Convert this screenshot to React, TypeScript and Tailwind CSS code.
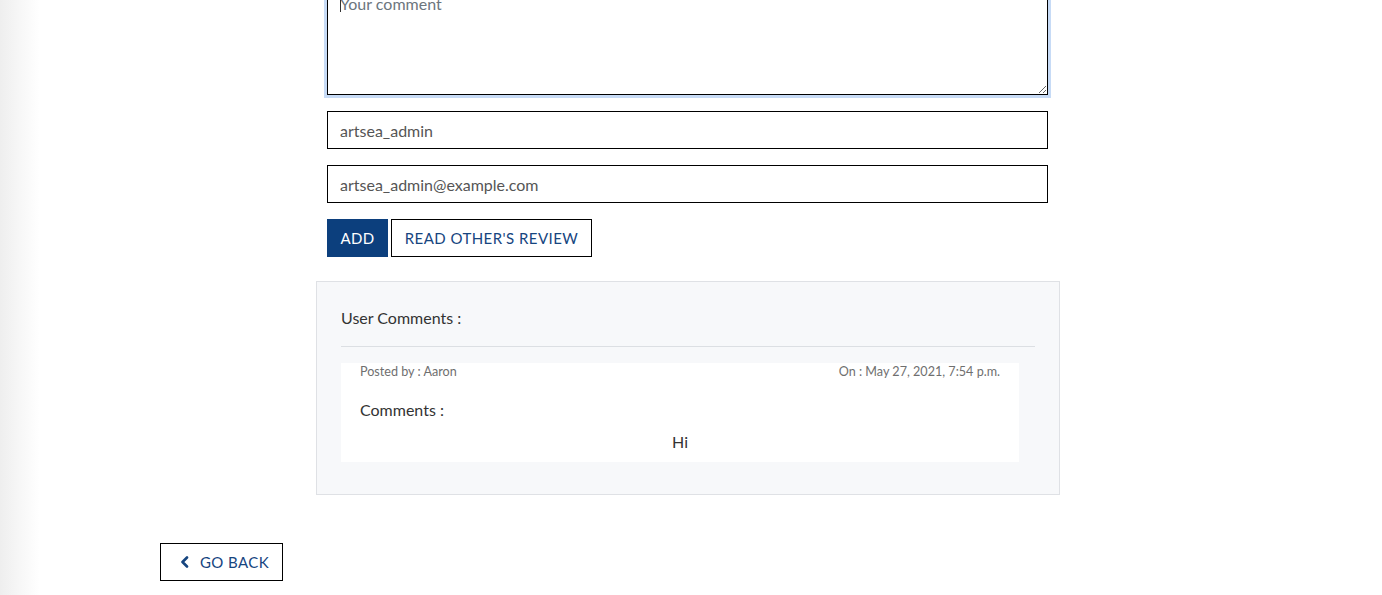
export default function App() {
  return (
    <div className="flex h-[595px] overflow-hidden bg-white font-['Lato','Liberation_Sans',sans-serif] text-[#333]">
      {/* sidebar shadow */}
      <div className="w-10 shrink-0 bg-gradient-to-r from-[#eeeeee] via-[#f7f7f7] to-white" />

      <div className="-ml-1 flex-1">
        <div className="ml-[280px] w-[744px] -mt-[15px]">
          {/* Comment form */}
          <form className="ml-[11px] w-[721px] space-y-4">
            <div className="relative">
              <textarea
                placeholder="Your comment"
                className="block h-[110px] w-full border border-black px-3 py-[6px] text-base leading-6 text-[#555] placeholder:text-[#6c757d] shadow-[0_0_0_3px_#c7dbf6] outline-none"
              />
              <span className="absolute left-[13px] top-[14px] h-[13px] w-px bg-[#333]" />
            </div>
            <input
              defaultValue="artsea_admin"
              className="block h-[38px] w-full border border-black px-3 text-base text-[#555] outline-none"
            />
            <input
              defaultValue="artsea_admin@example.com"
              className="block h-[38px] w-full border border-black px-3 text-base text-[#555] outline-none"
            />
            <div className="flex gap-[3px]">
              <button type="button" className="h-[38px] w-[61px] bg-[#0c3f7d] text-[15px] uppercase tracking-[0.3px] text-white">
                Add
              </button>
              <button type="button" className="h-[38px] w-[201px] border border-black bg-white text-[15px] uppercase tracking-[0.45px] text-[#16457f]">
                Read other's review
              </button>
            </div>
          </form>

          {/* User comments */}
          <div className="mt-6 border border-[#dfe1e5] bg-[#f7f8fa] px-6 pt-6 pb-8">
            <h5 className="text-base leading-6 text-[#333]">User Comments :</h5>
            <hr className="mt-4 mb-4 border-t border-[#dcdfe3]" />
            <div className="mr-4 bg-white px-[19px] pb-2">
              <div className="flex justify-between text-[12.6px] leading-[18px] text-[#6f6f6f]">
                <span>Posted by : Aaron</span>
                <span>On : May 27, 2021, 7:54 p.m.</span>
              </div>
              <p className="mt-[17px] text-base leading-6 text-[#333]">Comments :</p>
              <p className="mt-2 text-center text-base leading-6 text-[#333]">Hi</p>
            </div>
          </div>
        </div>

        {/* Go back */}
        <button
          type="button"
          className="ml-[124px] mt-[48px] flex h-[38px] w-[123px] items-center gap-[11px] border border-black bg-white pl-[19px] text-[15px] tracking-[0.4px] text-[#16457f]"
        >
          <svg width="9" height="12" viewBox="0 0 9 12" fill="none">
            <polyline points="7,1.5 2.5,6 7,10.5" stroke="#16457f" strokeWidth="2.6" strokeLinecap="round" strokeLinejoin="round" />
          </svg>
          GO BACK
        </button>
      </div>
    </div>
  );
}
